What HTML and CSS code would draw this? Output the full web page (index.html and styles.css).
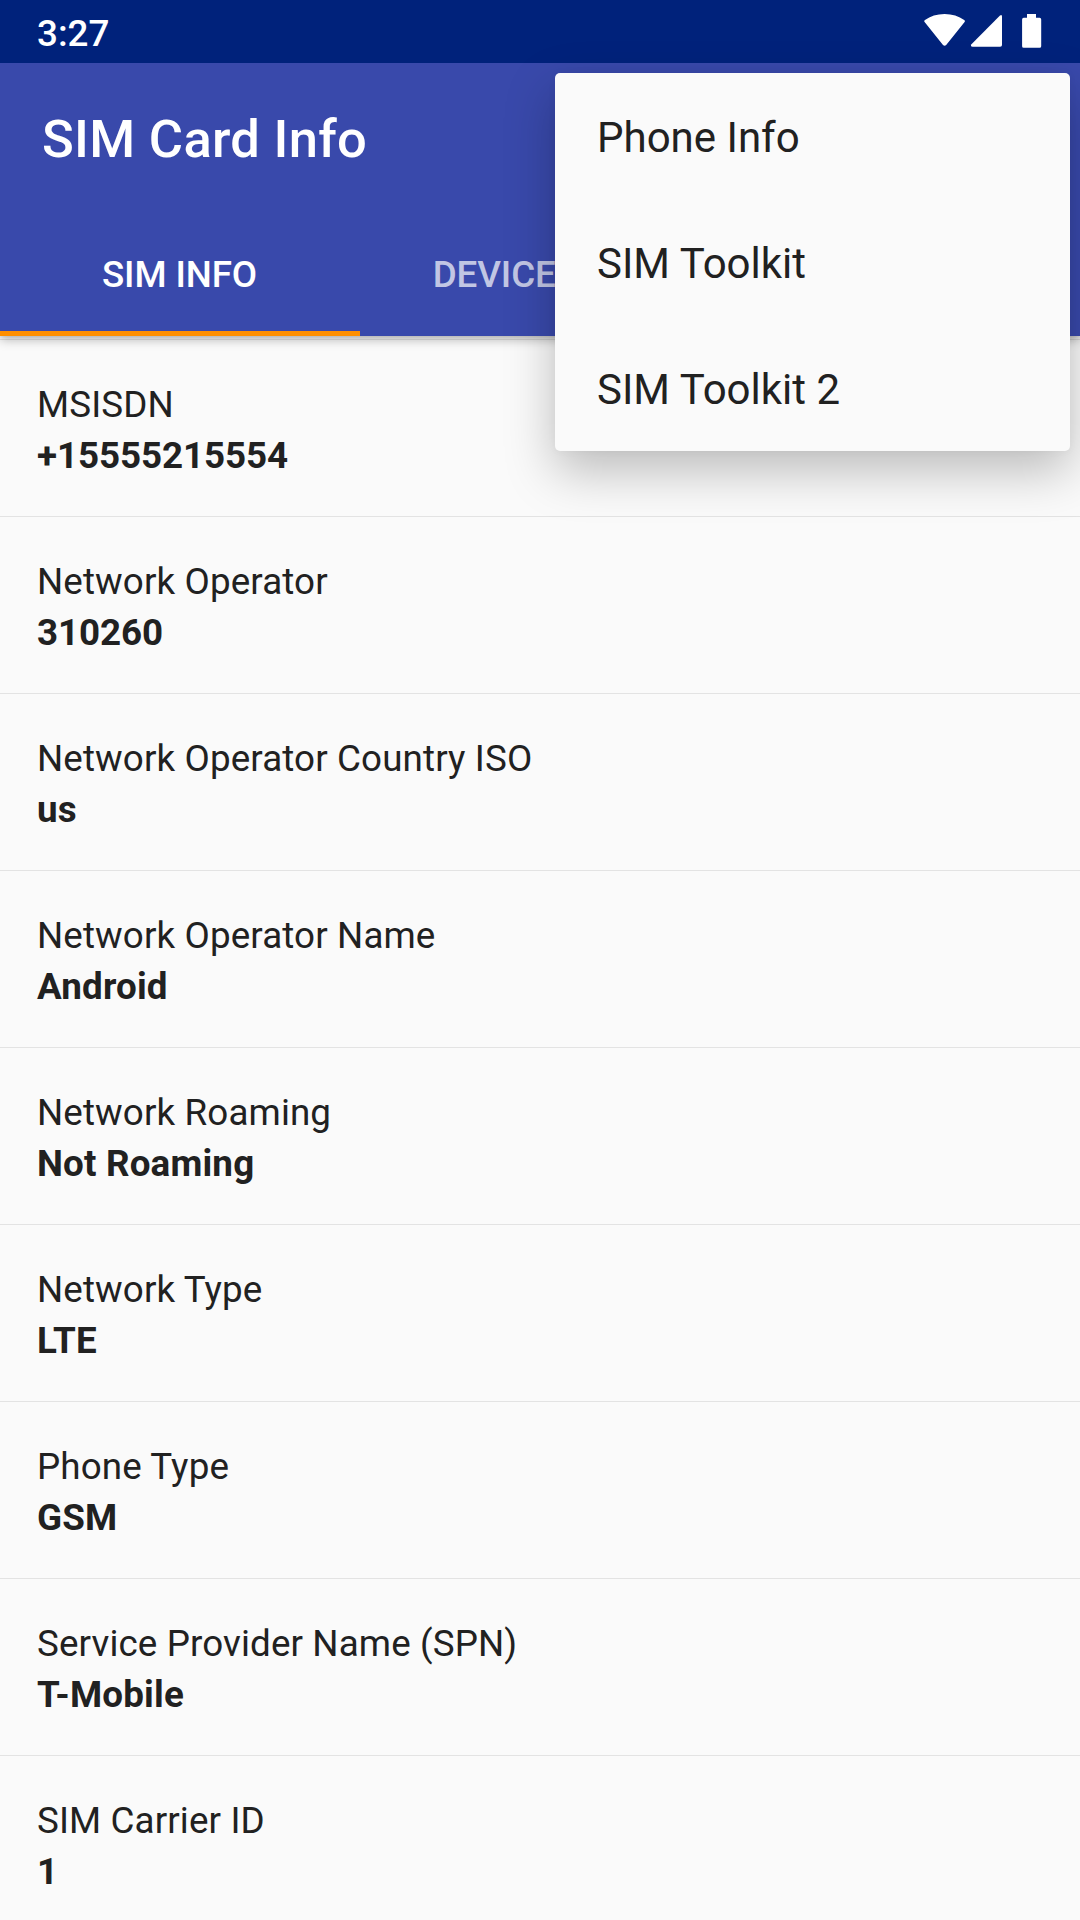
FILE: index.html
```html
<!DOCTYPE html>
<html lang="en">
<head>
  <meta charset="utf-8">
  <title>SIM Card Info</title>
  <link rel="stylesheet" href="styles.css">
</head>
<body>
  <div class="status-bar">
    <span class="time">3:27</span>
    <svg class="status-icons" width="120" height="36" viewBox="0 0 120 36" fill="#fff">
      <!-- wifi -->
      <path d="M.8 9.2Q-.4 8 1 7Q9 .9 20.6 .9Q32 .9 40.2 7Q41.5 8 40.4 9.2L22.2 32Q20.6 33.6 19 32Z"/>
      <!-- signal -->
      <path d="M76 2.6Q78 1.2 78 3.6V32Q78 33.8 76.2 33.8H48.6Q46.4 33.8 47.2 31.6Z"/>
      <!-- battery -->
      <path d="M103 1H112V4.8H115.6Q117.2 4.8 117.2 6.4V33.2Q117.2 34.8 115.6 34.8H99.7Q98.1 34.8 98.1 33.2V6.4Q98.1 4.8 99.7 4.8H103Z"/>
    </svg>
  </div>

  <header class="app-bar">
    <h1 class="title">SIM Card Info</h1>
    <nav class="tabs">
      <div class="tab active">SIM INFO</div>
      <div class="tab">DEVICE INFO</div>
    </nav>
  </header>

  <main class="list">
    <div class="item">
      <div class="label">MSISDN</div>
      <div class="value number">+15555215554</div>
    </div>
    <div class="item">
      <div class="label">Network Operator</div>
      <div class="value number">310260</div>
    </div>
    <div class="item">
      <div class="label">Network Operator Country ISO</div>
      <div class="value">us</div>
    </div>
    <div class="item">
      <div class="label">Network Operator Name</div>
      <div class="value">Android</div>
    </div>
    <div class="item">
      <div class="label">Network Roaming</div>
      <div class="value">Not Roaming</div>
    </div>
    <div class="item">
      <div class="label">Network Type</div>
      <div class="value">LTE</div>
    </div>
    <div class="item">
      <div class="label">Phone Type</div>
      <div class="value">GSM</div>
    </div>
    <div class="item">
      <div class="label">Service Provider Name (SPN)</div>
      <div class="value">T-Mobile</div>
    </div>
    <div class="item">
      <div class="label">SIM Carrier ID</div>
      <div class="value number">1</div>
    </div>
  </main>

  <div class="menu">
    <div class="menu-item">Phone Info</div>
    <div class="menu-item">SIM Toolkit</div>
    <div class="menu-item">SIM Toolkit 2</div>
  </div>
</body>
</html>
```
FILE: styles.css
```css
* {
  box-sizing: border-box;
}
body {
  margin: 0;
  height: 1920px;
  overflow: hidden;
  background: #fafafa;
  color: #212121;
  font-family: Roboto, sans-serif;
  font-size: 36.75px;
}
.status-bar {
  position: relative;
  z-index: 1;
  display: flex;
  justify-content: space-between;
  height: 63px;
  padding: 13px 36px 0 37px;
  background: #00227b;
  color: #fff;
}
.time {
  font-weight: 500;
  line-height: 41px;
}
.app-bar {
  position: relative;
  height: 273px;
  background: #3949ab;
  color: #fff;
  box-shadow: 0 4px 10px rgba(0,0,0,0.26), 0 0 4px rgba(0,0,0,0.12);
}
.title {
  margin: 0;
  height: 147px;
  padding: 5px 42px 0;
  font-size: 52.5px;
  font-weight: 500;
  letter-spacing: 0.3px;
  line-height: 142px;
}
.tabs {
  display: grid;
  grid-template-columns: repeat(3, 360px);
}
.tab {
  height: 126px;
  padding: 3px 1px 0 0;
  border-bottom: 5px solid transparent;
  color: rgba(255,255,255,0.7);
  font-weight: 500;
  letter-spacing: -0.12px;
  line-height: 123px;
  text-align: center;
}
.tab.active {
  border-color: #ff8f00;
  color: #fff;
}
.list {
  margin-top: 3px;
  border-top: 1px solid #e3e3e3;
}
.item {
  height: 177px;
  padding: 39px 37px 0;
  border-bottom: 1px solid #e3e3e3;
  line-height: 51px;
}
.label {
  letter-spacing: 0.13px;
}
.value {
  font-weight: bold;
  letter-spacing: 0.18px;
}
.value.number {
  letter-spacing: -0.08px;
}
.menu {
  position: absolute;
  z-index: 2;
  top: 73px;
  right: 10px;
  width: 515px;
  border-radius: 5px;
  background: #fafafa;
  box-shadow: 0 20px 50px rgba(0,0,0,0.25), 0 0 8px rgba(0,0,0,0.04);
}
.menu-item {
  height: 126px;
  padding-left: 42px;
  font-size: 42px;
  line-height: 130px;
}
```
